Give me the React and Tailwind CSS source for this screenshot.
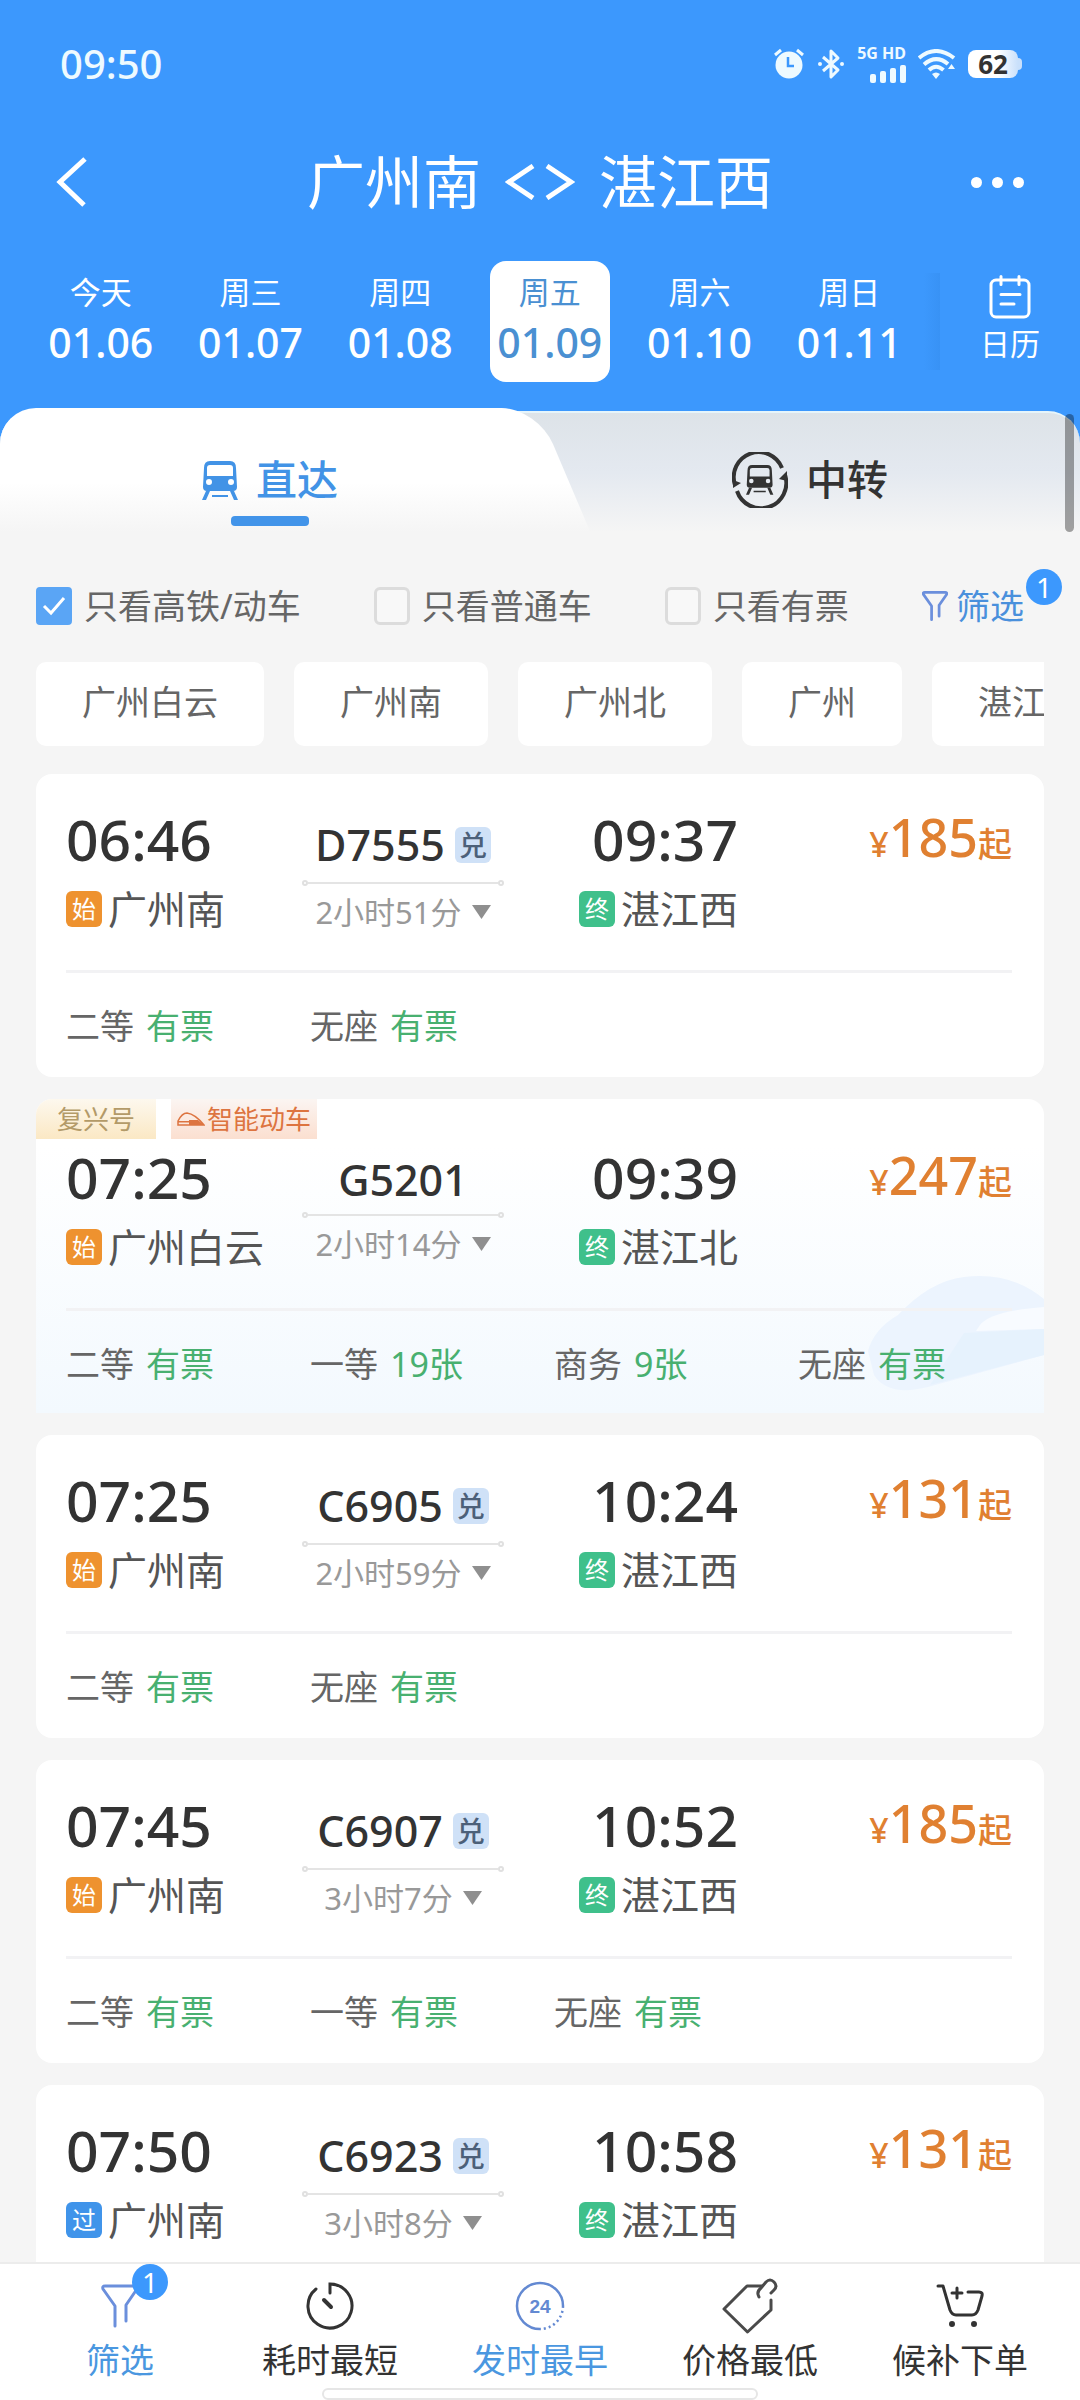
import React, { useState } from "react";

const days = [
  { label: "今天", date: "01.06" },
  { label: "周三", date: "01.07" },
  { label: "周四", date: "01.08" },
  { label: "周五", date: "01.09" },
  { label: "周六", date: "01.10" },
  { label: "周日", date: "01.11" },
];

const stations = ["广州白云", "广州南", "广州北", "广州", "湛江西"];

const trains = [
  {
    no: "D7555",
    exchange: true,
    depart: "06:46",
    arrive: "09:37",
    fromType: "始",
    from: "广州南",
    to: "湛江西",
    duration: "2小时51分",
    price: 185,
    seats: [
      ["二等", "有票"],
      ["无座", "有票"],
    ],
  },
  {
    no: "G5201",
    smart: true,
    depart: "07:25",
    arrive: "09:39",
    fromType: "始",
    from: "广州白云",
    to: "湛江北",
    duration: "2小时14分",
    price: 247,
    seats: [
      ["二等", "有票"],
      ["一等", "19张"],
      ["商务", "9张"],
      ["无座", "有票"],
    ],
  },
  {
    no: "C6905",
    exchange: true,
    depart: "07:25",
    arrive: "10:24",
    fromType: "始",
    from: "广州南",
    to: "湛江西",
    duration: "2小时59分",
    price: 131,
    seats: [
      ["二等", "有票"],
      ["无座", "有票"],
    ],
  },
  {
    no: "C6907",
    exchange: true,
    depart: "07:45",
    arrive: "10:52",
    fromType: "始",
    from: "广州南",
    to: "湛江西",
    duration: "3小时7分",
    price: 185,
    seats: [
      ["二等", "有票"],
      ["一等", "有票"],
      ["无座", "有票"],
    ],
  },
  {
    no: "C6923",
    exchange: true,
    depart: "07:50",
    arrive: "10:58",
    fromType: "过",
    from: "广州南",
    to: "湛江西",
    duration: "3小时8分",
    price: 131,
    seats: [],
  },
];

const stationTagColors = {
  始: "bg-[#ee922f]",
  过: "bg-[#4094ea]",
  终: "bg-[#3fc08b]",
};

/* ---------- icons ---------- */

const TrainShape = () => (
  <>
    <path
      fillRule="evenodd"
      d="M8 0h20q6 0 6 7l1 19q0 4-4 4H5q-4 0-4-4L2 7q0-7 6-7Zm0 4q-3 0-3 3v8h26V7q0-3-3-3ZM7 18a3 3 0 1 0 0 6 3 3 0 0 0 0-6Zm22 0a3 3 0 1 0 0 6 3 3 0 0 0 0-6Z"
    />
    <path d="M4 30h4l-4 9H0ZM28 30h4l4 9h-4ZM10 34h16v2H10Z" />
  </>
);

const DirectIcon = () => (
  <svg width="36" height="39" viewBox="0 0 36 39" fill="currentColor">
    <TrainShape />
  </svg>
);

const TransferIcon = () => (
  <svg width="56" height="56" viewBox="0 0 56 56" fill="none">
    <path
      d="M3 33A25 25 0 0 1 50 16M53 23A25 25 0 0 1 5 39"
      stroke="currentColor"
      strokeWidth="4"
    />
    <path d="M1 36V28l8 3ZM55 19v10l-8-2Z" fill="currentColor" />
    <g transform="translate(14 13) scale(.76)" fill="currentColor">
      <TrainShape />
    </g>
  </svg>
);

const AlarmIcon = () => (
  <svg width="32" height="32" viewBox="0 0 32 32" fill="none">
    <circle cx="16" cy="17" r="13.5" fill="#eefaff" />
    <path d="M2 7l6-5M30 7l-6-5" stroke="#eefaff" strokeWidth="3" />
    <path d="M15 9v9h6" stroke="#3c98fd" strokeWidth="2.5" />
  </svg>
);

const BluetoothIcon = () => (
  <svg width="28" height="32" viewBox="0 0 28 32" fill="none">
    <path
      d="M6 9l15 13-7 7V3l7 7L6 23"
      stroke="#eefaff"
      strokeWidth="3"
      strokeLinejoin="round"
    />
    <circle cx="3" cy="16" r="2" fill="#eefaff" />
    <circle cx="25" cy="16" r="2" fill="#eefaff" />
  </svg>
);

const SignalIcon = () => (
  <svg width="36" height="18" viewBox="0 0 36 18" fill="#eefaff">
    <rect x="0" y="9" width="6" height="9" rx="2" />
    <rect x="10" y="6" width="6" height="12" rx="2" />
    <rect x="20" y="3" width="6" height="15" rx="2" />
    <rect x="30" y="0" width="6" height="18" rx="2" />
  </svg>
);

const WifiIcon = () => (
  <svg width="38" height="30" viewBox="0 0 38 30" fill="none">
    <g stroke="#eefaff" strokeWidth="4">
      <path d="M1 9Q18-5 36 9" />
      <path d="M6 15.500Q18 5 30 15" />
      <path d="M11 21Q18 14.500 25.500 21" />
    </g>
    <path d="M14 25q4-3 8 0l-4 5ZM30 20l3.500-5 3.500 5Z" fill="#eefaff" />
  </svg>
);

const CalendarIcon = () => (
  <svg
    width="42"
    height="44"
    viewBox="0 0 42 44"
    fill="none"
    stroke="currentColor"
    strokeWidth="3"
    strokeLinecap="round"
  >
    <rect x="2" y="5" width="38" height="37" rx="5" />
    <path d="M12 1.500v8M30 1.500v8M12 19.500h19M12 29h13" />
  </svg>
);

const FunnelIcon = ({ small }) => (
  <svg
    width={small ? 26 : 38}
    height={small ? 30 : 44}
    viewBox="0 0 38 44"
    fill="none"
    stroke="#6b8fdc"
    strokeWidth={small ? 4 : 3}
    strokeLinecap="round"
    strokeLinejoin="round"
  >
    <path d="M14 42V22L2 5q-1-3 2-3h30q3 0 2 3L25 21v16" />
  </svg>
);

const TimerIcon = () => (
  <svg
    width="48"
    height="48"
    viewBox="0 0 48 48"
    fill="none"
    stroke="currentColor"
    strokeWidth="3"
    strokeLinecap="round"
  >
    <path d="M24 11V2a22 22 0 1 1-14 5" />
    <path d="M18 18l7 7" strokeWidth="4" />
  </svg>
);

const Clock24Icon = () => (
  <svg width="50" height="50" viewBox="0 0 50 50" fill="none">
    <path d="M25 48A23 23 0 1 1 48 25" stroke="#6389d2" strokeWidth="2.5" />
    <path
      d="M48 25A23 23 0 0 1 25 48"
      stroke="#6389d2"
      strokeWidth="2.5"
      strokeDasharray="2 3"
    />
    <text
      x="25"
      y="32"
      textAnchor="middle"
      fontSize="19"
      fontWeight="700"
      fontFamily="Liberation Sans"
      fill="#6389d2"
    >
      24
    </text>
  </svg>
);

const PriceTagIcon = () => (
  <svg
    width="56"
    height="56"
    viewBox="0 0 56 56"
    fill="none"
    stroke="#4a4a4a"
    strokeWidth="3"
    strokeLinecap="round"
    strokeLinejoin="round"
  >
    <path d="M49 22v10L25.500 54 2 31 25 8h15" />
    <path d="M37 19q-3-5 2-9l5-6q4-4 8 0 4 4 0 8l-3 3" />
  </svg>
);

const CartIcon = () => (
  <svg
    width="48"
    height="44"
    viewBox="0 0 48 44"
    fill="none"
    stroke="currentColor"
    strokeWidth="3"
    strokeLinecap="round"
    strokeLinejoin="round"
  >
    <path d="M2 2h5l7 24q2 5 6 5h16q4 0 6-5l4-14q1-4-3-4H32" />
    <path d="M21 4v10M16 9h10" />
    <circle cx="16" cy="40" r="1.500" fill="currentColor" />
    <circle cx="38" cy="40" r="1.500" fill="currentColor" />
  </svg>
);

const SmartTrainIcon = () => (
  <svg width="28" height="14" viewBox="0 0 28 14" fill="none">
    <path
      d="M1 13V9Q5 1 10 1q8 1 17 12H1Z"
      stroke="#dd7440"
      strokeWidth="1.500"
    />
    <path d="M12 8h9l6 5H12ZM1 9h20v1.500H1Z" fill="#dd7440" />
  </svg>
);

/* ---------- header ---------- */

const StatusBar = () => (
  <div className="flex h-32 items-center justify-between pr-[58px] pl-[60px] text-[#eefaff]">
    <span className="text-[40px] font-medium">09:50</span>
    <div className="flex items-center gap-3">
      <AlarmIcon />
      <BluetoothIcon />
      <div className="flex flex-col items-end gap-1">
        <span className="text-base leading-4 font-bold">5G HD</span>
        <SignalIcon />
      </div>
      <WifiIcon />
      <div className="flex items-center">
        <span className="flex h-7 w-[50px] items-center justify-center rounded-lg bg-linear-to-r from-white from-60% to-[#c9e0fb] text-[26px] font-bold text-[#333]">
          62
        </span>
        <span className="h-3 w-1 rounded-r bg-[#c9e0fb]" />
      </div>
    </div>
  </div>
);

const TitleBar = () => (
  <div className="flex h-[108px] items-center justify-between px-14 text-white">
    <button aria-label="返回" className="w-[53px]">
      <svg width="32" height="50" viewBox="0 0 32 50" fill="none">
        <path d="M29 2L4 25l24 23" stroke="currentColor" strokeWidth="5" />
      </svg>
    </button>
    <h1 className="flex items-center gap-6 text-[58px] leading-none">
      广州南
      <svg width="70" height="36" viewBox="0 0 70 36" fill="none">
        <path
          d="M28 2L4 18l24 16M42 2l24 16-24 16"
          stroke="currentColor"
          strokeWidth="5"
        />
      </svg>
      湛江西
    </h1>
    <button aria-label="更多" className="flex gap-[10px]">
      <span className="size-[11px] rounded-full bg-white" />
      <span className="size-[11px] rounded-full bg-white" />
      <span className="size-[11px] rounded-full bg-white" />
    </button>
  </div>
);

const DayStrip = ({ active, onSelect }) => (
  <div className="flex pt-[25px] pb-[26px] pl-[26px] text-white">
    {days.map((d, i) => (
      <div key={d.date} className="flex flex-1 justify-center">
        <button
          onClick={() => onSelect(i)}
          className={`flex h-[121px] w-[120px] flex-col items-center rounded-2xl pt-[6px] ${
            i === active ? "bg-white text-[#4a90d2]" : ""
          }`}
        >
          <span className="text-[31px] leading-[50px]">{d.label}</span>
          <span className="text-[41px] leading-[50px] font-medium">
            {d.date}
          </span>
        </button>
      </div>
    ))}
    <div className="my-3 w-4 bg-linear-to-r from-[#3c98fd] to-[#3892f5]" />
    <button className="flex w-[140px] flex-col items-center pt-[14px]">
      <CalendarIcon />
      <span className="text-[30px] leading-[50px]">日历</span>
    </button>
  </div>
);

const Tabs = () => (
  <div className="relative flex h-[124px] bg-[#3c98fd]">
    <span className="absolute inset-x-0 top-[3px] bottom-0 rounded-t-[32px] border-t-2 border-[#e6f5fb] bg-linear-to-b from-[#dde3e8] via-[#e4e9f0] via-50% to-[#f5f5f5]" />
    <button className="relative flex flex-1 items-center justify-center pt-5 text-[41px] font-medium text-[#4293e6]">
      <span className="absolute inset-y-0 right-[60px] left-0 rounded-tl-[36px] bg-linear-to-b from-white from-60% to-[#f5f5f5]" />
      <span className="absolute inset-y-0 -right-[24px] left-1/2 skew-x-[23deg] rounded-tr-[36px] bg-linear-to-b from-white from-60% to-[#f5f5f5]" />
      <span className="relative flex items-center gap-[18px]">
        <DirectIcon />
        直达
      </span>
      <span className="absolute bottom-[6px] left-1/2 h-[10px] w-[78px] -translate-x-1/2 rounded bg-[#4294e9]" />
    </button>
    <button className="relative flex flex-1 items-center justify-center gap-[18px] pt-5 text-[41px] font-medium text-[#333]">
      <TransferIcon />
      中转
    </button>
    <span className="absolute top-[6px] right-[6px] h-[118px] w-[9px] rounded-full bg-black/35" />
  </div>
);

/* ---------- filters ---------- */

const CheckFilter = ({ label, defaultChecked }) => (
  <label className="relative flex items-center gap-3">
    <input
      type="checkbox"
      defaultChecked={defaultChecked}
      className="peer h-[38px] w-9 appearance-none rounded-md border-[3px] border-[#dcdcdc] bg-[#f8f8f8] checked:rounded-sm checked:border-[#5aa5f5] checked:bg-[#5aa5f5]"
    />
    <svg
      width="24"
      height="20"
      viewBox="0 0 24 20"
      fill="none"
      className="absolute left-[6px] hidden peer-checked:block"
    >
      <path d="M2 10l7 7L22 2" stroke="#fff" strokeWidth="3" />
    </svg>
    {label}
  </label>
);

const Filters = () => (
  <div className="flex items-center justify-between pt-[50px] pr-[56px] pl-9 text-[34px] leading-[48px] text-[#666]">
    <CheckFilter label="只看高铁/动车" defaultChecked />
    <CheckFilter label="只看普通车" />
    <CheckFilter label="只看有票" />
    <button className="relative flex items-center gap-2 text-[#4a90dc]">
      <FunnelIcon small />
      筛选
      <span className="absolute -top-[13px] -right-[38px] flex size-9 items-center justify-center rounded-full bg-[#3c98fd] text-[28px] leading-9 text-white">
        1
      </span>
    </button>
  </div>
);

const StationChips = () => (
  <div className="mx-9 mt-8 flex gap-[30px] overflow-hidden text-[34px] text-[#666]">
    {stations.map((s) => (
      <button
        key={s}
        className="h-[84px] shrink-0 rounded-[10px] bg-white px-[46px] pb-1"
      >
        {s}
      </button>
    ))}
  </div>
);

/* ---------- train list ---------- */

const Station = ({ type, name }) => (
  <div className="flex h-12 items-center gap-[6px] text-[39px] text-[#555]">
    <span
      className={`flex size-9 shrink-0 items-center justify-center rounded-md text-2xl text-white ${stationTagColors[type]}`}
    >
      {type}
    </span>
    <span className="whitespace-nowrap">{name}</span>
  </div>
);

const SmartTags = () => (
  <div className="absolute top-0 left-0 flex gap-[15px] text-[26px] leading-[40px]">
    <span className="rounded-tl-2xl bg-linear-to-b from-[#fdf8ee] to-[#fbe8c4] px-[21px] text-[#b39a68]">
      复兴号
    </span>
    <span className="flex items-center gap-[2px] bg-linear-to-b from-[#fbf5f2] to-[#fbdfd0] px-[6px] text-[#dd7440]">
      <SmartTrainIcon />
      智能动车
    </span>
  </div>
);

const TrainWatermark = () => (
  <svg
    width="176"
    height="116"
    viewBox="0 0 176 116"
    fill="none"
    className="absolute right-0 bottom-[22px]"
  >
    <path
      d="M0 76Q6 54 30 40 62 6 96 2q46-6 80 22v56L60 112Q20 122 6 100Z"
      fill="#ecf4fe"
    />
    <path d="M112 50q10-14 64-18v22l-68 2Z" fill="#f8fbff" />
    <path d="M96 58l80-4v26L62 110Z" fill="#e6f2fd" />
  </svg>
);

const TrainCard = ({ train }) => (
  <article
    className={`relative pr-8 pl-[30px] ${
      train.smart
        ? "rounded-t-2xl bg-linear-to-b from-white from-15% to-[#f3f9fe] pt-[49px] pb-[25px]"
        : "rounded-2xl bg-white pt-9 pb-[27px]"
    }`}
  >
    {train.smart && <TrainWatermark />}
    {train.smart && <SmartTags />}
    <div className="relative grid grid-cols-[236fr_202fr_234fr_274fr] text-[#333]">
      <div>
        <p className="text-[57px] leading-[58px] font-medium">{train.depart}</p>
        <div className="mt-[17px]">
          <Station type={train.fromType} name={train.from} />
        </div>
      </div>

      <div className="flex flex-col items-center pt-2">
        <div
          className={`flex items-center gap-[10px] text-[43px] font-medium ${
            train.exchange ? "h-[54px]" : "h-12"
          }`}
        >
          {train.no}
          {train.exchange && (
            <span className="flex size-9 items-center justify-center rounded-md bg-[#cfe1f7] text-[28px] font-medium text-[#4c6079]">
              兑
            </span>
          )}
        </div>
        <div className="mt-2 flex w-full items-center">
          <span className="size-[6px] rounded-full border-2 border-[#e0e0e0]" />
          <span className="h-[2px] flex-1 bg-[#e4e4e4]" />
          <span className="size-[6px] rounded-full border-2 border-[#e0e0e0]" />
        </div>
        <button className="mt-[6px] flex items-center gap-[10px] text-[31px] leading-10 whitespace-nowrap text-[#999]">
          {train.duration}
          <svg width="19" height="14" viewBox="0 0 19 14" fill="#8f8f8f">
            <path d="M0 0h19L9.500 14Z" />
          </svg>
        </button>
      </div>

      <div className="flex flex-col items-end">
        <p className="text-[57px] leading-[58px] font-medium">{train.arrive}</p>
        <div className="mt-[17px]">
          <Station type="终" name={train.to} />
        </div>
      </div>

      <p className="text-right text-[34px] leading-[54px] font-medium text-[#e08031]">
        ¥<span className="text-[52px] leading-[54px]">{train.price}</span>起
      </p>
    </div>

    <ul className="relative mt-[37px] grid grid-cols-[244fr_244fr_244fr_214fr] border-t-[3px] border-[#f2f2f4] pt-[29px] text-[34px] leading-[48px] text-[#666]">
      {train.seats.map(([name, left]) => (
        <li key={name} className="flex gap-3">
          <span>{name}</span>
          <span className="text-[#48b070]">{left}</span>
        </li>
      ))}
    </ul>
  </article>
);

/* ---------- bottom bar ---------- */

const navItems = [
  { label: "筛选", icon: <FunnelIcon />, active: true, badge: 1 },
  { label: "耗时最短", icon: <TimerIcon /> },
  { label: "发时最早", icon: <Clock24Icon />, active: true },
  { label: "价格最低", icon: <PriceTagIcon /> },
  { label: "候补下单", icon: <CartIcon /> },
];

const BottomNav = () => (
  <nav className="relative flex shrink-0 border-t-2 border-[#ececec] bg-white px-[15px] pb-4">
    {navItems.map((item) => (
      <button
        key={item.label}
        className={`flex flex-1 flex-col items-center text-[34px] leading-[48px] ${
          item.active ? "text-[#4a97e0]" : "text-[#333]"
        }`}
      >
        <span className="relative mt-3 flex h-[60px] items-center">
          {item.icon}
          {item.badge && (
            <span className="absolute -top-3 left-[31px] flex size-9 items-center justify-center rounded-full bg-[#3c98fd] text-[28px] leading-9 text-white">
              {item.badge}
            </span>
          )}
        </span>
        {item.label}
      </button>
    ))}
    <span className="absolute bottom-0 left-1/2 h-3 w-[436px] -translate-x-1/2 rounded-full border-2 border-[#e6e6e6] bg-white" />
  </nav>
);

const App = () => {
  const [activeDay, setActiveDay] = useState(3);

  return (
    <div className="flex h-screen flex-col bg-[#f5f5f5] font-['Noto_Sans','Noto_Sans_CJK_SC',sans-serif]">
      <header className="shrink-0 bg-[#3c98fd]">
        <StatusBar />
        <TitleBar />
        <DayStrip active={activeDay} onSelect={setActiveDay} />
      </header>
      <main className="flex-1 overflow-y-auto [scrollbar-width:none]">
        <Tabs />
        <Filters />
        <StationChips />
        <div className="mx-9 mt-7 flex flex-col gap-[22px] pb-6">
          {trains.map((t) => (
            <TrainCard key={t.no} train={t} />
          ))}
        </div>
      </main>
      <BottomNav />
    </div>
  );
};

export default App;
